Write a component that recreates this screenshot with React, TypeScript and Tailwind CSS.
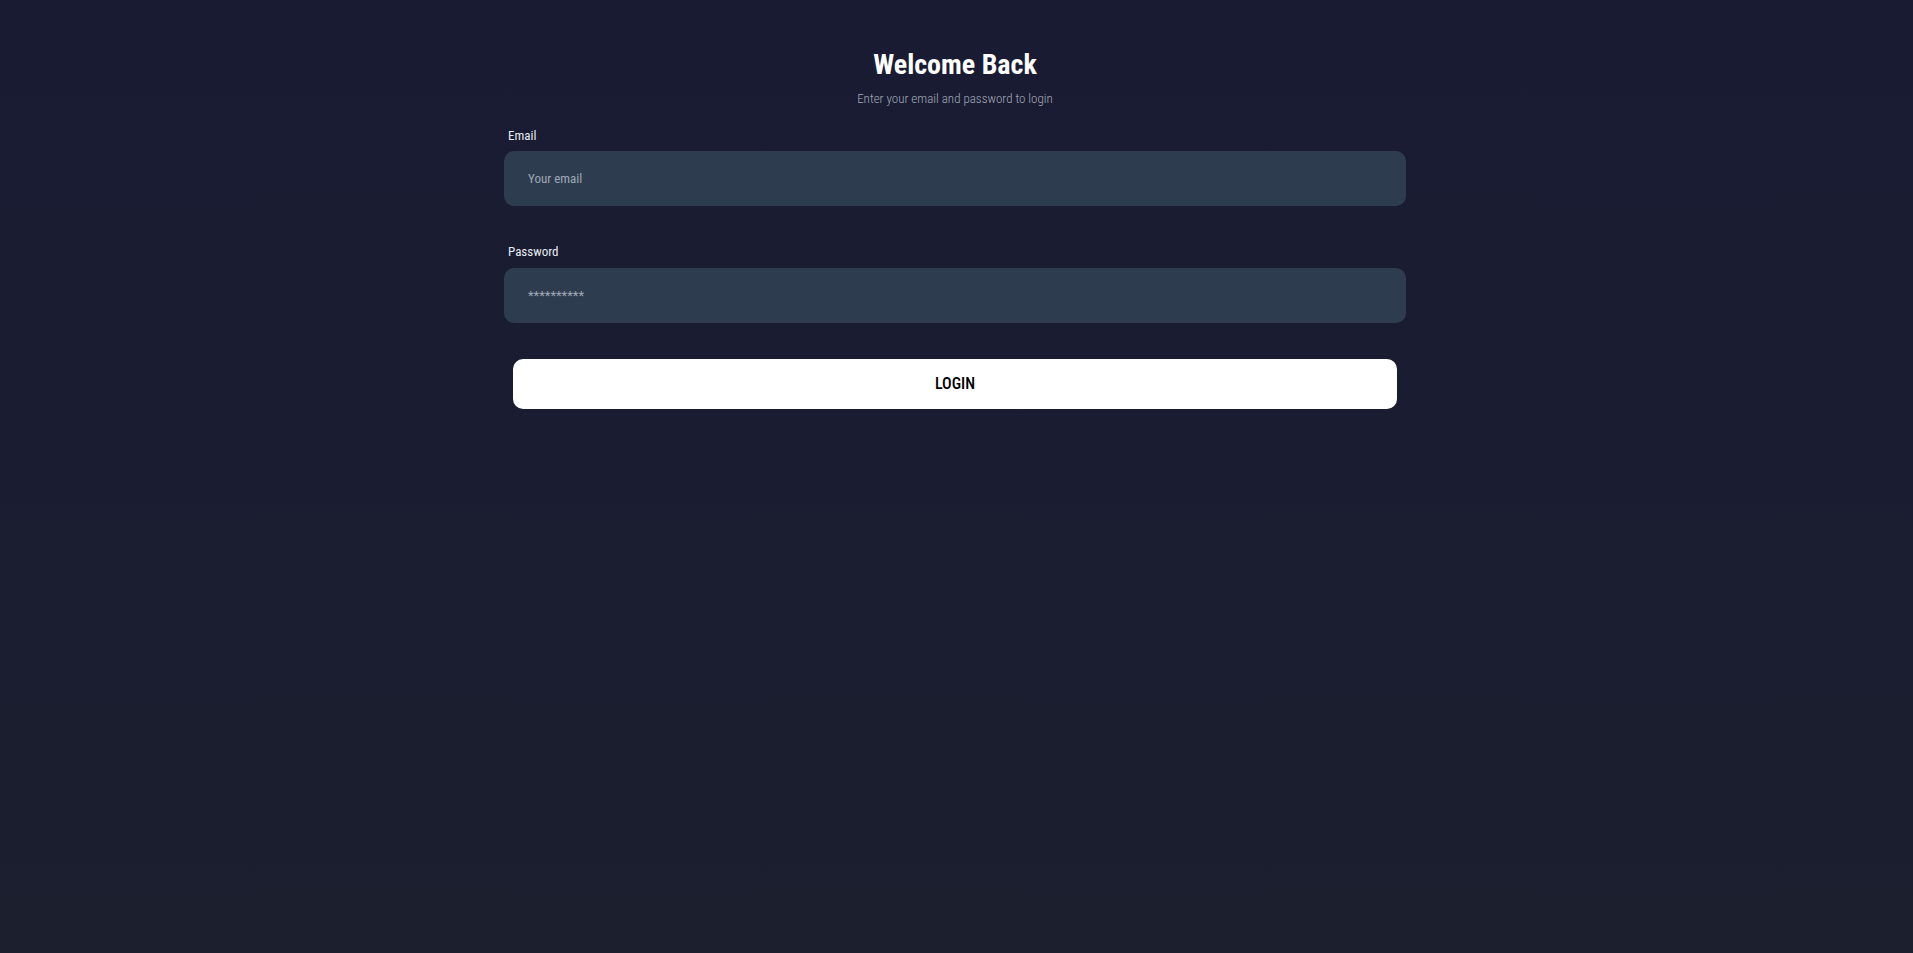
import React from "react";

export default function App() {
  return (
    <div className="min-h-screen w-full bg-gradient-to-b from-[#191b33] to-[#1b1f2e] pr-[3px] font-['Roboto',sans-serif] font-stretch-condensed">
      <div className="mx-auto w-[902px] pt-[48px]">
        <h1 className="text-center text-[28px] leading-[34px] font-bold text-white">Welcome Back</h1>
        <p className="mt-[7px] text-center text-[13px] leading-[20px] font-light text-[#a3abb9]">
          Enter your email and password to login
        </p>
        <form className="mt-[17px]" onSubmit={(e) => e.preventDefault()}>
          <label className="block px-[4px] text-[13px] leading-[20px] font-[450] text-[#e6ebf2]">Email</label>
          <input
            type="email"
            placeholder="Your email"
            className="mt-[5px] block h-[55px] w-full rounded-[10px] bg-[#2e3c50] px-[24px] text-[13px] font-normal text-white outline-none placeholder:text-[#9ea8b6]"
          />
          <label className="mt-[36px] block px-[4px] text-[13px] leading-[20px] font-[450] text-[#e6ebf2]">Password</label>
          <input
            type="password"
            placeholder="**********"
            className="mt-[6px] block h-[55px] w-full rounded-[10px] bg-[#2e3c50] px-[24px] text-[13px] font-normal text-white outline-none placeholder:text-[#9ea8b6]"
          />
          <div className="mt-[36px] px-[9px]">
            <button
              type="submit"
              className="block h-[50px] w-full rounded-[10px] bg-white text-[16px] font-[460] text-black"
            >
              LOGIN
            </button>
          </div>
        </form>
      </div>
    </div>
  );
}
